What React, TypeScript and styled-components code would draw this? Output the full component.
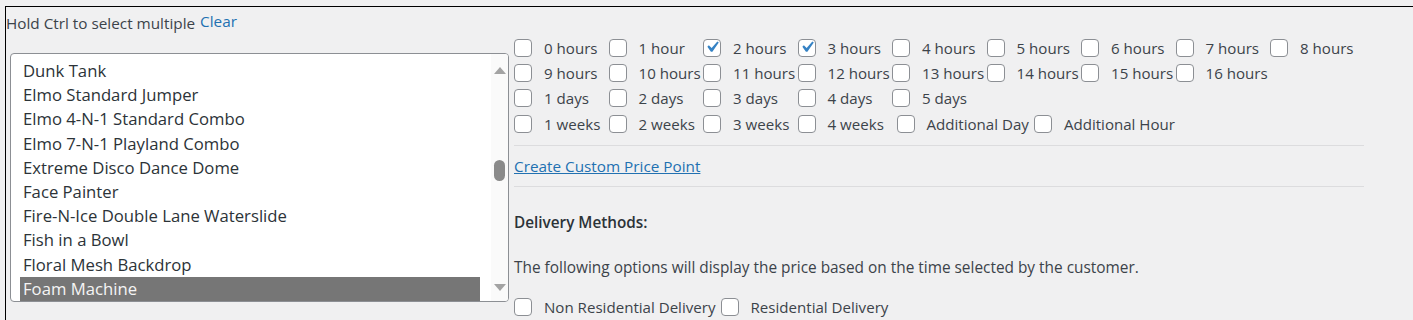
import React from "react";
import styled, { createGlobalStyle } from "styled-components";

const Global = createGlobalStyle`
  html, body { margin: 0; padding: 0; background: #f0f0f1; }
  body { font-family: "Open Sans", "Noto Sans", sans-serif; color: #3c434a; }
  * { box-sizing: border-box; }
`;

const Frame = styled.div`
  margin: 6px 0 0 5px;
  border-top: 1px solid #000;
  border-left: 1px solid #000;
  height: 314px;
  display: flex;
  align-items: flex-start;
`;

const LeftCell = styled.div`
  width: 503px;
  display: flex;
  flex-direction: column;
`;

const Hint = styled.div`
  margin-top: 4px;
  height: 20px;
  font-size: 15.3px;
  line-height: 20px;
  color: #3c434a;
  white-space: nowrap;
`;

const ClearLink = styled.a`
  color: #2271b1;
  text-decoration: none;
  vertical-align: 2px;
  margin-left: 5px;
  cursor: pointer;
`;

const Listbox = styled.div`
  margin: 22px 0 0 4px;
  width: 499px;
  height: 249px;
  background: #fff;
  border: 1px solid #8c8f94;
  border-radius: 4px;
  display: flex;
  overflow: hidden;
`;

const Options = styled.div`
  flex: 1;
  padding: 5px 11px 0 9px;
`;

const Option = styled.div<{ $selected?: boolean }>`
  height: 24.2px;
  line-height: 24.2px;
  padding-left: 3px;
  font-size: 16.7px;
  white-space: nowrap;
  color: ${(p) => (p.$selected ? "#f4f4f4" : "#2c3338")};
  background: ${(p) => (p.$selected ? "#767676" : "transparent")};
`;

const Scrollbar = styled.div`
  width: 17px;
  display: flex;
  flex-direction: column;
  align-items: center;
  padding: 13px 0 10px;
  background: #fafafa;
`;

const Arrow = styled.div<{ $down?: boolean }>`
  width: 0;
  height: 0;
  border-left: 6px solid transparent;
  border-right: 6px solid transparent;
  ${(p) =>
    p.$down
      ? "border-top: 7px solid #a3a3a3;"
      : "border-bottom: 7px solid #a3a3a3;"}
`;

const Track = styled.div`
  flex: 1;
  width: 100%;
  display: flex;
  flex-direction: column;
  align-items: center;
`;

const Thumb = styled.div`
  width: 11px;
  height: 21px;
  border-radius: 6px;
  background: #8a8a8a;
`;

const RightCell = styled.div`
  margin-left: 5px;
  width: 851px;
  padding-top: 28px;
  display: flex;
  flex-direction: column;
`;

const Group = styled.div`
  display: flex;
  flex-wrap: wrap;
`;

const Choice = styled.label<{ $lead?: number }>`
  display: inline-flex;
  align-items: center;
  height: 25.4px;
  min-width: 94.5px;
  padding-right: 2px;
  margin-left: ${(p) => p.$lead ?? 0}px;
  font-size: 15.1px;
  color: #3c434a;
  white-space: nowrap;
`;

const Box = styled.span`
  width: 18px;
  height: 18px;
  flex: none;
  border: 1px solid #8c8f94;
  border-radius: 4px;
  background: #fff;
  margin-right: 12px;
  display: grid;
  place-items: center;
  overflow: visible;
  svg { margin: -4px 0 0 -3px; }
`;

const Divider = styled.hr`
  border: 0;
  border-top: 1px solid #dcdcde;
  margin: 8px 0 0;
  width: 850px;
`;

const LinkRow = styled.div`
  height: 40px;
  display: flex;
  align-items: center;
  font-size: 15.3px;
`;

const CustomLink = styled.a`
  color: #2271b1;
  text-decoration: underline;
  cursor: pointer;
`;

const Heading = styled.div`
  margin-top: 25px;
  font-size: 15.3px;
  line-height: 20px;
  font-weight: 600;
  color: #2c3338;
`;

const Sentence = styled.p`
  margin: 26px 0 0;
  font-size: 15.4px;
  line-height: 20px;
  color: #3c434a;
`;

const DeliveryGroup = styled(Group)`
  margin-top: 17px;
`;

const Check = () => (
  <svg width="22" height="22" viewBox="0 0 20 20" aria-hidden>
    <path d="M14.83 4.89l1.34.94-5.81 8.38H9.02L5.78 9.67l1.34-1.25 2.57 2.4z" fill="#3582c4" />
  </svg>
);

const CheckItem = ({ label, checked, lead }: { label: string; checked?: boolean; lead?: number }) => (
  <Choice $lead={lead}>
    <Box role="checkbox" aria-checked={!!checked}>{checked && <Check />}</Box>
    <span>{label}</span>
  </Choice>
);

const items = [
  "Dunk Tank",
  "Elmo Standard Jumper",
  "Elmo 4-N-1 Standard Combo",
  "Elmo 7-N-1 Playland Combo",
  "Extreme Disco Dance Dome",
  "Face Painter",
  "Fire-N-Ice Double Lane Waterslide",
  "Fish in a Bowl",
  "Floral Mesh Backdrop",
  "Foam Machine",
];

const hours = [
  "0 hours", "1 hour", "2 hours", "3 hours", "4 hours", "5 hours", "6 hours", "7 hours", "8 hours",
  "9 hours", "10 hours", "11 hours", "12 hours", "13 hours", "14 hours", "15 hours", "16 hours",
];
const days = ["1 days", "2 days", "3 days", "4 days", "5 days"];
const weeks = ["1 weeks", "2 weeks", "3 weeks", "4 weeks"];

export default function App() {
  const thumbOffset = 86;
  return (
    <>
      <Global />
      <Frame>
        <LeftCell>
          <Hint>
            Hold Ctrl to select multiple<ClearLink>Clear</ClearLink>
          </Hint>
          <Listbox role="listbox" aria-multiselectable>
            <Options>
              {items.map((it) => (
                <Option key={it} $selected={it === "Foam Machine"} role="option">
                  {it}
                </Option>
              ))}
            </Options>
            <Scrollbar>
              <Arrow />
              <Track>
                <Thumb style={{ marginTop: thumbOffset }} />
              </Track>
              <Arrow $down />
            </Scrollbar>
          </Listbox>
        </LeftCell>
        <RightCell>
          <Group>
            {hours.map((h) => (
              <CheckItem key={h} label={h} checked={h === "2 hours" || h === "3 hours"} />
            ))}
          </Group>
          <Group>
            {days.map((d) => (
              <CheckItem key={d} label={d} />
            ))}
          </Group>
          <Group>
            {weeks.map((w) => (
              <CheckItem key={w} label={w} />
            ))}
            <CheckItem label="Additional Day" lead={4.5} />
            <CheckItem label="Additional Hour" lead={3} />
          </Group>
          <Divider />
          <LinkRow>
            <CustomLink>Create Custom Price Point</CustomLink>
          </LinkRow>
          <Divider style={{ marginTop: 0 }} />
          <Heading>Delivery Methods:</Heading>
          <Sentence>The following options will display the price based on the time selected by the customer.</Sentence>
          <DeliveryGroup>
            <CheckItem label="Non Residential Delivery" lead={0} />
            <CheckItem label="Residential Delivery" lead={3} />
          </DeliveryGroup>
        </RightCell>
      </Frame>
    </>
  );
}
